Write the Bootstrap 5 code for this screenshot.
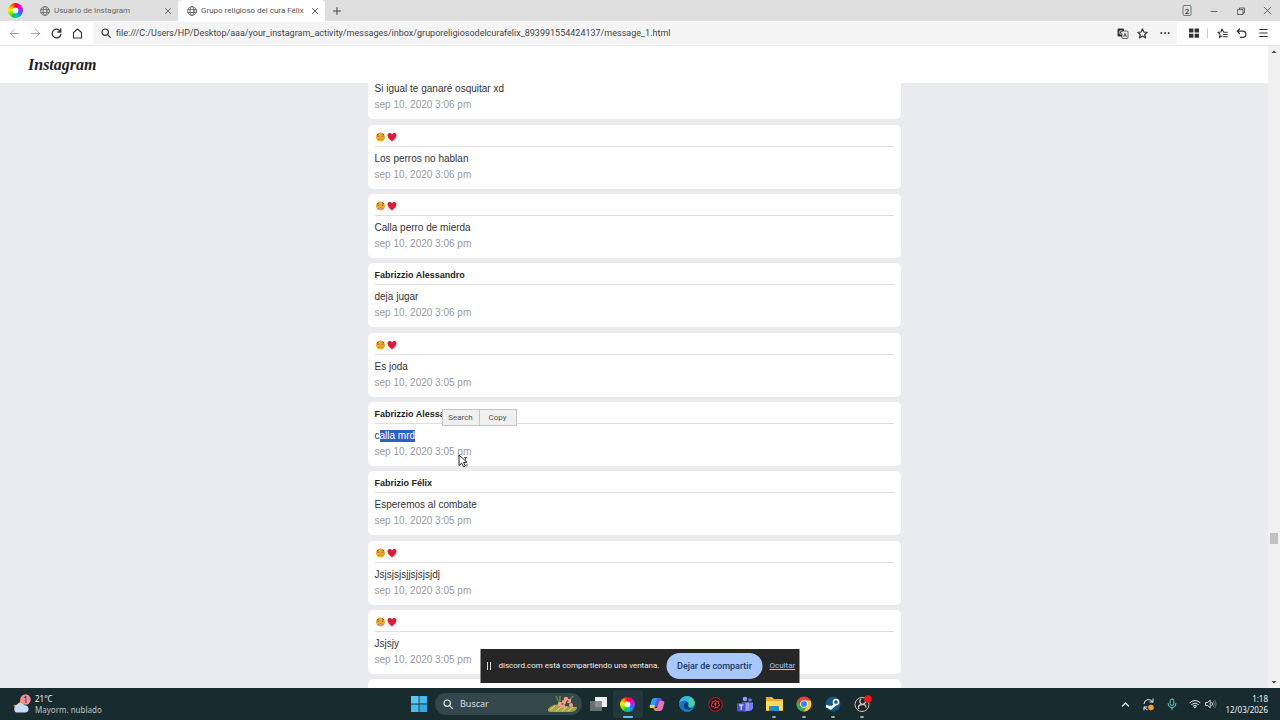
<!DOCTYPE html>
<html lang="es">
<head>
<meta charset="utf-8">
<meta name="viewport" content="width=device-width, initial-scale=1">
<title>Grupo religioso del cura Félix</title>
<link href="https://cdn.jsdelivr.net/npm/bootstrap@5.3.0/dist/css/bootstrap.min.css" rel="stylesheet">
<style>
:root{--ui:"Noto Sans","Open Sans",sans-serif;--ui-narrow:Roboto,"Open Sans",sans-serif}
body{font-family:var(--ui);font-size:8px;line-height:12px;color:#444;background:#fff}
button{border:0;background:none;padding:0;color:inherit;font:inherit;line-height:inherit}
svg{display:block;flex:none}
.ln{fill:none;stroke:currentColor;stroke-linecap:round;stroke-linejoin:round}
.tabstrip{background:#dfdfdf;height:21px;padding-left:8px;font-family:var(--ui-narrow)}
.tab-item{width:147px;height:21px;padding:0 6px 0 9px;gap:4px;color:#666}
.tab-item.current{background:#fff;border-radius:4px 4px 0 0;color:#555}
.tab-item a{color:inherit}
.wincontrols{gap:17px;padding-right:8px}
.toolbar{height:25px;border-bottom:1px solid #e6e6e6;padding:0 12px 0 9px;color:#333}
.navbtns{gap:10px;width:84px}
.address{background:#f4f4f4;height:22px;padding:0 7px 0 8px;border-radius:2px}
.address input{border:0;background:none;outline:0;font-family:var(--ui-narrow);font-size:9px;color:#444;padding:0 5px;height:20px;min-width:0}
.pagehead{height:37px;padding-left:28px}
.wordmark{font:italic bold 16px/20px "Liberation Serif",serif;color:#222}
.pagebody{background:#e9ebee;min-height:0}
.feed{width:533px;margin:-28px auto 0;font:10px/16px "Liberation Sans",sans-serif;color:#333}
.msg{background:#fff;border-radius:5px;height:64px;padding:5px 7px 6px;margin-bottom:5px;position:relative}
.msg:nth-child(3n+1){margin-bottom:6px}
.msg h2{font-size:9px;line-height:14px;height:17px;padding-bottom:2px;margin:0 0 4px;border-bottom:1px solid #dcdee1;font-weight:bold;color:#222;gap:1px}
.msg p{margin:0;height:16px}
.msg time{display:block;color:#999}
.picked{background:#2f5fc4;color:#fff;line-height:12px;display:inline-block}
.popmenu{position:absolute;left:74px;top:7px;height:17px;background:#f0f0f0;border:1px solid #c4c4c4;font:8px/14px var(--ui-narrow);color:#555}
.popmenu button{width:36px}
.popmenu button+button{border-left:1px solid #c4c4c4;width:37px}
.pointer{position:absolute;left:90px;top:52px}
.sidebar-scroll{width:12px;background:#f1f1f1;color:#555}
.thumb{width:8px;height:11px;background:#c1c1c1;margin-left:2px}
.sharebar{position:absolute;left:50%;bottom:5px;transform:translateX(-50%);width:319px;height:34px;background:#262626;color:#eee;padding:0 7px 0 6px;gap:7px;font:8px/12px var(--ui-narrow)}
.sharebar .stop{background:#a8c7fa;color:#1c3767;width:96px;height:26px;border-radius:13px;font-size:9px;font-weight:500}
.sharebar a{color:#a8c7fa}
.taskbar{height:32px;background:#182b2f;color:#eee;padding:0 12px}
.side{flex:1 1 0;line-height:11px}
.findbox{width:147px;height:22px;border-radius:11px;background:#34474c;padding:0 4px 0 8px;margin-right:2px}
.findbox input{border:0;background:none;outline:0;color:#ddd;font-size:9px;width:90px;padding:0 7px}
.findbox input::placeholder{color:#ddd;opacity:1}
.apps{width:293px;display:grid;grid-template-columns:repeat(10,1fr)}
.apps button{height:28px;display:flex;align-items:center;justify-content:center;position:relative;border-radius:3px}
.apps .front{background:#23363b}
.apps .running::after{content:"";position:absolute;bottom:0;left:50%;margin-left:-2px;width:4px;height:2px;border-radius:1px;background:#9aa6a8}
.apps .front::after{width:10px;margin-left:-5px;background:#5cc0ee}
.wheel{width:15px;height:15px;border-radius:50%;background:radial-gradient(circle closest-side,#fff 0 34%,transparent 44%),conic-gradient(#f03,#f0a,#a2f,#36f,#0bd,#0c5,#8e0,#fe0,#f80,#f03)}
</style>
</head>
<body class="vh-100 overflow-hidden d-flex flex-column">
<svg width="0" height="0" class="position-absolute" aria-hidden="true">
<defs>
<symbol id="globe" viewBox="0 0 10 10"><g class="ln" stroke-width=".8"><circle cx="5" cy="5" r="4.4"/><ellipse cx="5" cy="5" rx="2" ry="4.4"/><path d="M.8 3.5h8.4M.8 6.5h8.4"/></g></symbol>
<symbol id="cross" viewBox="0 0 8 8"><path class="ln" d="M1.500 1.500l5 5M6.500 1.500l-5 5"/></symbol>
<symbol id="lens" viewBox="0 0 10 10"><g class="ln" stroke-width="1.2"><circle cx="4.200" cy="4.200" r="3.200"/><path d="M6.600 6.600L9.300 9.300"/></g></symbol>
<symbol id="weary" viewBox="0 0 10 10"><circle cx="5" cy="5" r="4.600" fill="#f0ae35"/><path d="M1.500 2.800l2-1M6.500 1.800l2 1M2 4l1.800.4M8 4l-1.800.4" fill="none" stroke="#7c4a16" stroke-width=".9"/><path d="M2.200 7.800Q5 4.600 7.800 7.800z" fill="#7a4518"/><path d="M3.300 7.200h3.400" stroke="#fff" stroke-width=".6"/></symbol>
<symbol id="heart" viewBox="0 0 10 10"><path d="M5 9.500C2 7.300.5 5.500.5 3.300.5.700 3.800.2 5 2.400 6.200.2 9.500.7 9.500 3.300 9.500 5.500 8 7.300 5 9.500z" fill="#d91f3e"/></symbol>
</defs>
</svg>

<div class="tabstrip d-flex align-items-center flex-shrink-0">
  <span class="wheel me-2"></span>
  <div class="tab-item d-flex align-items-center flex-shrink-0">
    <svg width="10" height="10"><use href="#globe"/></svg><a href="#" class="flex-grow-1 text-decoration-none text-nowrap">Usuario de Instagram</a><button aria-label="Cerrar"><svg width="8" height="8"><use href="#cross"/></svg></button>
  </div>
  <div class="tab-item current d-flex align-items-center flex-shrink-0">
    <svg width="10" height="10"><use href="#globe"/></svg><a href="#" class="flex-grow-1 text-decoration-none text-nowrap">Grupo religioso del cura Félix</a><button aria-label="Cerrar"><svg width="8" height="8"><use href="#cross"/></svg></button>
  </div>
  <button class="ms-2" aria-label="Nueva pestaña"><svg width="8" height="8" viewBox="0 0 8 8"><path class="ln" d="M4 .500v7M.500 4h7"/></svg></button>
  <div class="wincontrols d-flex align-items-center ms-auto">
    <button aria-label="Ventanas"><svg width="10" height="11" viewBox="0 0 10 11"><rect x="1" y=".500" width="8" height="10" rx="1" fill="none" stroke="#777"/><text x="5" y="8.500" font-size="8" font-weight="500" text-anchor="middle" fill="#333">2</text></svg></button>
    <button aria-label="Minimizar"><svg width="10" height="10" viewBox="0 0 10 10"><path class="ln" stroke-width=".8" d="M2 5.500h6"/></svg></button>
    <button aria-label="Restaurar"><svg width="10" height="10" viewBox="0 0 10 10"><path class="ln" stroke-width=".8" d="M2 3.500h5V8.500H2zM3.500 3.300V2H8.500V7H7.200"/></svg></button>
    <button aria-label="Cerrar ventana"><svg width="9" height="9" viewBox="0 0 8 8"><path class="ln" stroke-width=".7" d="M1 1l6 6M7 1l-6 6"/></svg></button>
  </div>
</div>

<div class="toolbar d-flex align-items-center flex-shrink-0">
  <div class="navbtns d-flex align-items-center flex-shrink-0">
    <button class="text-black-50" aria-label="Atrás"><svg width="11" height="11" viewBox="0 0 11 11" opacity=".65"><path class="ln" d="M10 5.500H1.500M5.300 1.500L1.300 5.500l4 4"/></svg></button>
    <button class="text-black-50" aria-label="Adelante"><svg width="11" height="11" viewBox="0 0 11 11" opacity=".65"><path class="ln" d="M1 5.500h8.500M5.700 1.500l4 4-4 4"/></svg></button>
    <button aria-label="Recargar"><svg width="11" height="11" viewBox="0 0 11 11"><path class="ln" stroke-width="1.300" d="M9.500 3.500A4.400 4.400 0 1 0 9.900 6.300M9.800 1v3H6.800"/></svg></button>
    <button aria-label="Inicio"><svg width="11" height="11" viewBox="0 0 11 11"><path class="ln" stroke-width="1.100" d="M1.500 10V4.500L5.500 1l4 3.500V10z"/></svg></button>
  </div>
  <div class="address d-flex align-items-center flex-grow-1">
    <svg width="10" height="10"><use href="#lens"/></svg>
    <input class="flex-grow-1" aria-label="Dirección" value="file:///C:/Users/HP/Desktop/aaa/your_instagram_activity/messages/inbox/gruporeligiosodelcurafelix_893991554424137/message_1.html">
    <div class="d-flex gap-2 align-items-center">
      <button aria-label="Traducir"><svg width="12" height="11" viewBox="0 0 12 11"><rect x=".500" y=".500" width="6.500" height="8" rx="1" fill="#333"/><rect x="5" y="3" width="6" height="7.500" rx="1" fill="#f4f4f4" stroke="#444" stroke-width=".8"/><path d="M6.500 9L8 5l1.500 4M7 7.700h2" fill="none" stroke="#444" stroke-width=".8"/><path d="M5.200 3.200a1.700 1.700 0 1 0 0 2.400V4.500H4" fill="none" stroke="#fff" stroke-width=".8"/></svg></button>
      <button aria-label="Favorito"><svg width="11" height="11" viewBox="0 0 11 11"><path class="ln" stroke-width="1.200" d="M5.500.9l1.400 3.100 3.300.3-2.500 2.200.8 3.400-3-1.800-3 1.800.8-3.400L.8 4.300l3.300-.3z"/></svg></button>
      <button class="ms-1" aria-label="Más"><svg width="10" height="10" viewBox="0 0 10 10" fill="#333"><circle cx="1.300" cy="5" r="1"/><circle cx="5" cy="5" r="1"/><circle cx="8.700" cy="5" r="1"/></svg></button>
    </div>
  </div>
  <div class="d-flex align-items-center gap-2 ps-2 ms-1">
    <button aria-label="Extensiones"><svg width="10" height="10" viewBox="0 0 10 10"><path fill="#333" d="M0 .500h4.400v4H0zM5.600.500H10v4H5.600zM0 5.700h4.400v4H0zM5.600 5.700H10v4H5.600z"/></svg></button>
    <svg width="2" height="10"><path d="M.500 0v10" stroke="#ccc"/></svg>
    <button aria-label="Lista de favoritos"><svg width="11" height="11" viewBox="0 0 11 11"><path class="ln" stroke-width="1.100" d="M6.500 3.800L5 1 3.800 4l-3 .2 2.300 2.100L2.400 9.600 5 8M7 4.200h3.300M6.500 6.500h3.800M6.500 8.800h3.800"/></svg></button>
    <button aria-label="Deshacer"><svg width="11" height="11" viewBox="0 0 11 11"><path class="ln" stroke-width="1.200" d="M3.500 1L1.200 3.200l2.300 2.300M1.500 3.200H6.800a3 3 0 0 1 0 6.200H4.500"/></svg></button>
    <button class="ms-1" aria-label="Menú"><svg width="9" height="10" viewBox="0 0 9 10"><path class="ln" stroke-width="1.200" d="M.8 1.500h7.400M.8 5h7.400M.8 8.500h7.400"/></svg></button>
  </div>
</div>

<div class="flex-grow-1 d-flex position-relative overflow-hidden">
  <main class="flex-grow-1 d-flex flex-column">
    <header class="pagehead d-flex align-items-center flex-shrink-0 bg-white"><span class="wordmark">Instagram</span></header>
    <div class="pagebody flex-grow-1 overflow-hidden">
      <ul class="feed list-unstyled">
        <li class="msg"><h2></h2><p>Si igual te ganaré osquitar xd</p><time>sep 10, 2020 3:06 pm</time></li>
        <li class="msg"><h2 class="d-flex align-items-center"><svg width="11" height="10"><use href="#weary"/></svg><svg width="10" height="10"><use href="#heart"/></svg></h2><p>Los perros no hablan</p><time>sep 10, 2020 3:06 pm</time></li>
        <li class="msg"><h2 class="d-flex align-items-center"><svg width="11" height="10"><use href="#weary"/></svg><svg width="10" height="10"><use href="#heart"/></svg></h2><p>Calla perro de mierda</p><time>sep 10, 2020 3:06 pm</time></li>
        <li class="msg"><h2>Fabrizzio Alessandro</h2><p>deja jugar</p><time>sep 10, 2020 3:06 pm</time></li>
        <li class="msg"><h2 class="d-flex align-items-center"><svg width="11" height="10"><use href="#weary"/></svg><svg width="10" height="10"><use href="#heart"/></svg></h2><p>Es joda</p><time>sep 10, 2020 3:05 pm</time></li>
        <li class="msg"><h2>Fabrizzio Alessandro</h2><p>c<span class="picked">alla mrd</span></p><time>sep 10, 2020 3:05 pm</time>
          <div class="popmenu d-flex"><button>Search</button><button>Copy</button></div>
          <svg class="pointer" width="11" height="14" viewBox="0 0 11 14"><path d="M1 1v10.500l2.700-2.300 1.800 3.600 1.800-.9-1.700-3.400L9 8.300z" fill="#fff" stroke="#222"/><path d="M6 3.500h3M7.500 3.500V6M9 10v2.500" stroke="#555" fill="none"/></svg>
        </li>
        <li class="msg"><h2>Fabrizio Félix</h2><p>Esperemos al combate</p><time>sep 10, 2020 3:05 pm</time></li>
        <li class="msg"><h2 class="d-flex align-items-center"><svg width="11" height="10"><use href="#weary"/></svg><svg width="10" height="10"><use href="#heart"/></svg></h2><p>Jsjsjsjsjjsjsjsjdj</p><time>sep 10, 2020 3:05 pm</time></li>
        <li class="msg"><h2 class="d-flex align-items-center"><svg width="11" height="10"><use href="#weary"/></svg><svg width="10" height="10"><use href="#heart"/></svg></h2><p>Jsjsjy</p><time>sep 10, 2020 3:05 pm</time></li>
        <li class="msg"></li>
      </ul>
    </div>
  </main>
  <div class="sidebar-scroll d-flex flex-column">
    <svg width="12" height="12" viewBox="0 0 12 12"><path d="M3.500 7L6 4.500 8.500 7z" fill="#444"/></svg>
    <div style="flex:474 1 0"></div><div class="thumb"></div><div style="flex:132 1 0"></div>
    <svg width="12" height="12" viewBox="0 0 12 12"><path d="M3.500 5L6 7.500 8.500 5z" fill="#444"/></svg>
  </div>
  <div class="sharebar d-flex align-items-center text-nowrap">
    <svg width="5" height="8" viewBox="0 0 5 8"><path d="M1 0v8M4 0v8" stroke="#ddd"/></svg>
    <span class="flex-grow-1">discord.com está compartiendo una ventana.</span>
    <button class="stop flex-shrink-0">Dejar de compartir</button>
    <a href="#">Ocultar</a>
  </div>
</div>

<footer class="taskbar d-flex align-items-center flex-shrink-0">
  <div class="side d-flex align-items-center">
    <svg width="19" height="20" viewBox="0 0 19 20" class="me-1"><path d="M8 3a6 6 0 0 1-7 8 7 7 0 0 0 10 2z" fill="#f2a93c"/><path d="M4 18.500a4 4 0 0 1 .5-7 4.500 4.500 0 0 1 8-.2 3.700 3.700 0 0 1 1.500 7.200z" fill="#c5dcfa"/><circle cx="13.500" cy="5.500" r="5.200" fill="#f48a9c"/><text x="13.500" y="8.500" font-size="8" text-anchor="middle" fill="#222">1</text></svg>
    <div>21°C<br><span class="opacity-75">Mayorm. nublado</span></div>
  </div>
  <div class="d-flex align-items-center">
    <button class="px-2" aria-label="Inicio"><svg width="16" height="16" viewBox="0 0 16 16"><path fill="#5cc8f5" d="M0 0h7.600v7.600H0z"/><path fill="#4bb8f0" d="M8.400 0H16v7.600H8.400zM0 8.400h7.600V16H0z"/><path fill="#35a6e8" d="M8.400 8.400H16V16H8.400z"/></svg></button>
    <div class="findbox d-flex align-items-center">
      <svg width="10" height="10"><use href="#lens"/></svg>
      <input type="search" placeholder="Buscar" aria-label="Buscar">
      <svg width="31" height="18" viewBox="0 0 31 18" class="ms-auto"><path d="M1 14Q6 8 14 10T30 12Q30 17 22 17H4Q0 17 1 14z" fill="#a5a545"/><path d="M3 15l5-4M9 16l5-4M15 16l5-4M21 16l5-4" stroke="#e1d677" stroke-width="1"/><path d="M12 7L9 1M13 6L13 1M22 6l4-5" stroke="#638a4b" stroke-width="1.500"/><g fill="#f0a08b"><circle cx="13" cy="9" r="2.200"/><circle cx="16" cy="11" r="2.200"/><circle cx="17" cy="7" r="2.200"/><circle cx="19" cy="4" r="2.200"/><circle cx="22" cy="6" r="2.200"/><circle cx="24" cy="10" r="2"/></g><g fill="#a94a3d"><circle cx="15.500" cy="9" r="1"/><circle cx="20.500" cy="6" r="1"/></g></svg>
    </div>
    <div class="apps">
      <button aria-label="Vista de tareas"><svg width="17" height="16" viewBox="0 0 17 16"><path fill="#f0f0f0" d="M5 1h12v10H5z"/><path fill="#777d80" fill-opacity=".85" d="M0 5h12v10H0z"/></svg></button>
      <button class="front running" aria-label="Navegador"><span class="wheel"></span></button>
      <button aria-label="Copilot"><svg width="16" height="15" viewBox="0 0 16 15"><path d="M5 1h4L6 11H2Q0 11 1 8L3 2.500Q3.500 1 5 1z" fill="#2f9df4"/><path d="M8.500 1h3q1 0 1.500 2l.5 1H10L8 10H5z" fill="#5b55df"/><path d="M1 8l5 0-1 3H2Q0 11 1 8z" fill="#e9d343"/><path d="M10 4h4q2 0 1 3l-1.500 5q-.5 2-2.500 2H7z" fill="#e475bb"/><path d="M4.500 11H9L8 14H6.500q-1.500 0-2-3z" fill="#ff845b"/></svg></button>
      <button aria-label="Edge"><svg width="16" height="16" viewBox="0 0 16 16"><circle cx="8" cy="8" r="7.800" fill="#168ed6"/><path d="M.300 7C1 2.500 4 .2 8 .2c4.500 0 7.800 3 7.800 6.500 0 3-2.300 4.300-4.800 4.300-1.600 0-2.100-.7-1.500-1.500C11 7.500 9 5 6 5 3 5 1 6 .3 7z" fill="#4bcf9c"/><path d="M.300 7C.8 2.800 4 .2 8 .2c2 0 3.500.5 4.700 1.500C8 2 10 5 9.500 6 7 4 2 5 .3 7z" fill="#35b3e6"/><path d="M.300 7C2 4.500 7 4 9.200 6.500 6 5.500 4 8.500 5.200 11.500S9.500 15.500 12 14.700C7 17.500.2 14.500.2 8z" fill="#1673c5"/><path d="M9.200 6.500C6 5.500 4 8.500 5.200 11.500 7 14 11 14.500 14.800 12 11 13 7.500 11 9.200 6.500z" fill="#123e75"/></svg></button>
      <button aria-label="Juego"><svg width="15" height="15" viewBox="0 0 15 15"><circle cx="7.500" cy="7.500" r="6.800" fill="#211112" stroke="#b9232e"/><path d="M4 4l2 1 1.500-2 1 2 2.500-1-.5 3 1.500 1-2 1v2l-2-1-1.500 1.500-1-2-2 .5.500-2L3 7.500l1.500-1zM6 7h3M7.500 5.500v4" stroke="#f0303f" fill="none"/></svg></button>
      <button aria-label="Teams"><svg width="16" height="16" viewBox="0 0 16 16"><circle cx="8" cy="3" r="2.300" fill="#9499ff"/><circle cx="13" cy="4" r="1.800" fill="#717bdc"/><path d="M10 6.500h6V12q-1 3-4 3h-2z" fill="#7580ea"/><path d="M5 6.500h7V12q0 3-4 3.500Q5 15 5 12z" fill="#969bf7"/><rect y="7" width="8.500" height="8.500" rx="1" fill="#4b4ec4"/><path d="M2 9h4.500M4.200 9v5" stroke="#fff" stroke-width="1.100"/></svg></button>
      <button class="running" aria-label="Explorador"><svg width="17" height="16" viewBox="0 0 17 16"><path d="M0 1h6l2 2h9v12H0z" fill="#e9af28"/><path d="M0 5h17v9H0z" fill="#ffdb5d"/><path d="M3 15v-4q0-1 1-1h8q1 0 1 1v4z" fill="#278cc4"/></svg></button>
      <button class="running" aria-label="Chrome"><svg width="16" height="16" viewBox="0 0 16 16"><circle cx="8" cy="8" r="7.500" fill="#e9443a"/><path d="M1.500 4.200A7.500 7.500 0 0 0 8 15.500l3.200-5.700H4.800z" fill="#34a853"/><path d="M8 15.500A7.500 7.500 0 0 0 14.500 4.500H8l3.200 5.300z" fill="#fbc936"/><circle cx="8" cy="8" r="3.800" fill="#fff"/><circle cx="8" cy="8" r="3" fill="#3f83ed"/></svg></button>
      <button class="running" aria-label="Steam"><svg width="16" height="16" viewBox="0 0 16 16"><circle cx="8" cy="8" r="7.500" fill="#155782"/><path d="M1 10l5 2 5-4" stroke="#fff" stroke-width="2.500" fill="none"/><circle cx="11" cy="6" r="2.600" fill="#155782" stroke="#fff" stroke-width="1.500"/><circle cx="5.500" cy="11.500" r="2" fill="#fff"/></svg></button>
      <button class="running" aria-label="OBS"><svg width="19" height="18" viewBox="0 0 19 18"><circle cx="9" cy="9.500" r="7" fill="#222" stroke="#ccc"/><path d="M8 4q-3 3 1 5.500 4-.5 4 3M9 9.500Q4 10 6 14M9 9.500q5-1 3-5" fill="none" stroke="#ccc" stroke-width="1.300"/><circle cx="15" cy="4" r="3.800" fill="#ee1919"/></svg></button>
    </div>
  </div>
  <div class="side d-flex align-items-center justify-content-end">
    <div class="d-flex align-items-center gap-2 me-2">
      <button class="me-1" aria-label="Iconos ocultos"><svg width="9" height="9" viewBox="0 0 9 9"><path class="ln" stroke-width="1.200" d="M1.500 6L4.500 3l3 3"/></svg></button>
      <svg width="13" height="13" viewBox="0 0 13 13"><path class="ln" d="M2 5.500A4.500 4.500 0 0 1 10.500 4M11 1v3H8M2 12V9h3M2.200 9.200q1 2 3 2.500"/><circle cx="9" cy="9.500" r="2.800" fill="#f3a12a"/></svg>
      <svg width="10" height="12" viewBox="0 0 10 12" class="ms-1" color="#76c7cb"><rect x="3.200" y="1" width="3.600" height="6.500" rx="1.800" class="ln"/><path class="ln" d="M1.200 5.500q0 4 3.800 4t3.800-4M5 9.500v2"/></svg>
      <div class="d-flex gap-1 ms-1">
      <svg width="12" height="10" viewBox="0 0 12 10"><path class="ln" d="M1 3.500q5-4 10 0M2.700 5.300q3.300-2.600 6.600 0M4.300 7q1.700-1.300 3.400 0"/><circle cx="6" cy="8.300" r=".9" fill="#eee"/></svg>
      <svg width="12" height="10" viewBox="0 0 12 10"><path class="ln" stroke-width=".9" d="M1 3.500h1.700L5.200 1.200v7.600L2.700 6.500H1zM7 3.500q1 1.500 0 3"/><path class="ln" stroke-width=".8" opacity=".45" d="M8.500 2.200q2 2.800 0 5.600M10 1.200q2.500 3.800 0 7.600"/></svg>
      </div>
    </div>
    <div class="text-end">1:18<br>12/03/2026</div>
  </div>
</footer>
<script src="https://cdn.jsdelivr.net/npm/bootstrap@5.3.0/dist/js/bootstrap.bundle.min.js"></script>
</body>
</html>
